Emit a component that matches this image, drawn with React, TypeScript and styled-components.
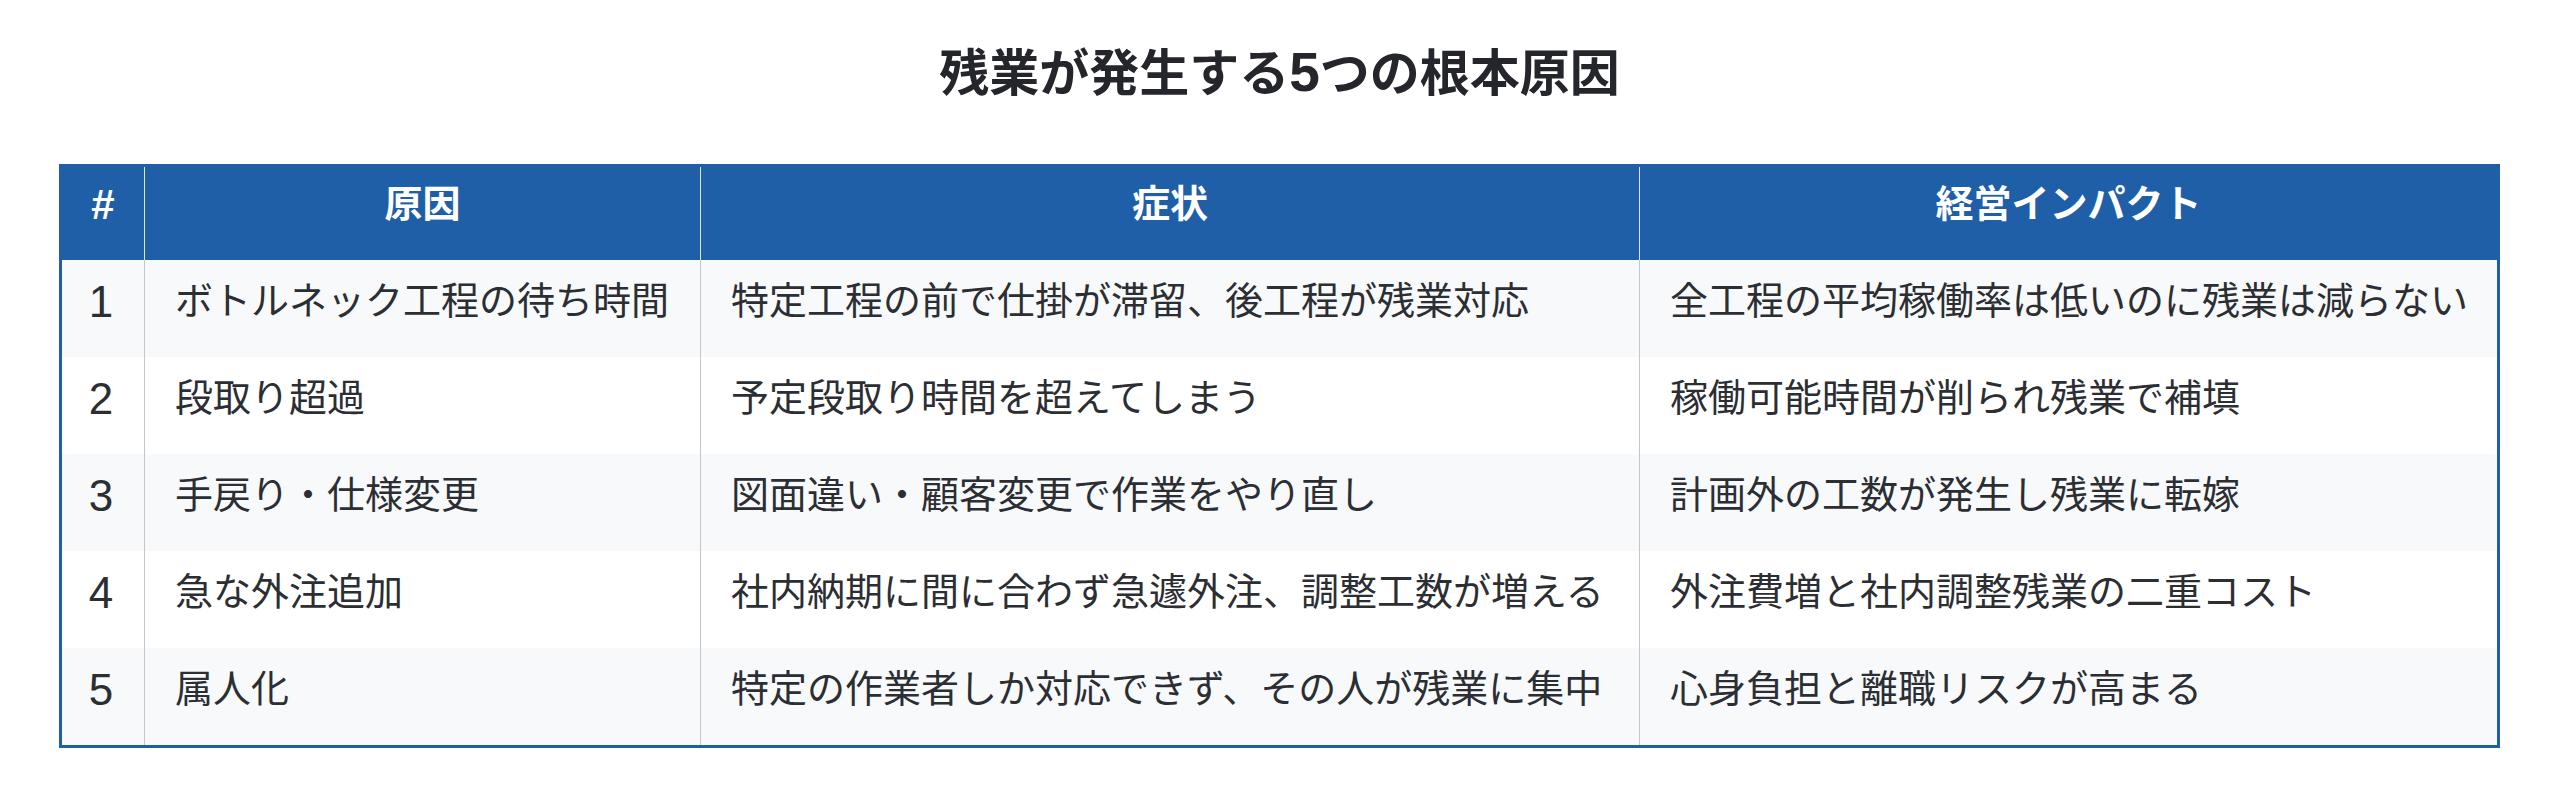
import React from "react";
import styled, { createGlobalStyle } from "styled-components";

const GlobalStyle = createGlobalStyle`
  html, body {
    margin: 0;
    padding: 0;
    background: #ffffff;
  }
  body {
    font-family: "Liberation Sans", "Noto Sans CJK JP", sans-serif;
    color: #2b2e33;
  }
`;

const Page = styled.div`
  padding: 42px 60px 40px 59px;
  display: flex;
  flex-direction: column;
  align-items: flex-start;
`;

const Title = styled.h2`
  align-self: stretch;
  margin: 0 0 60px;
  font-size: 50px;
  line-height: 60px;
  font-weight: 700;
  text-align: center;
  color: #24262b;
  font-family: "Liberation Sans", "Noto Sans CJK JP", sans-serif;
`;

const TitleDigit = styled.span`
  font-size: 55px;
  line-height: 60px;
`;

const Table = styled.table`
  width: 2441px;
  table-layout: fixed;
  border-collapse: separate;
  border-spacing: 0;
  border: 3px solid #1f5fa8;
  font-size: 38px;
  line-height: 57px;
`;

const HeadCell = styled.th<{ $w: number }>`
  box-sizing: border-box;
  width: ${(p) => p.$w}px;
  background: #1f5fa8;
  color: #ffffff;
  font-weight: 700;
  text-align: center;
  padding: 9px 20px 27px;
  white-space: nowrap;
  border-left: 1px solid rgba(255, 255, 255, 0.85);
  &:first-child {
    border-left: none;
    font-size: 42px;
  }
`;

const Row = styled.tr<{ $striped: boolean }>`
  background: ${(p) => (p.$striped ? "#f8f9fb" : "#ffffff")};
`;

const Cell = styled.td`
  box-sizing: border-box;
  padding: 13px 30px 27px;
  text-align: left;
  white-space: nowrap;
  color: #2b2e33;
  border-left: 1px solid #c4c6ca;
`;

const NumCell = styled(Cell)`
  border-left: none;
  padding-left: 0;
  padding-right: 4px;
  text-align: center;
  font-size: 44px;
`;

const columns = [
  { label: "#", w: 82 },
  { label: "原因", w: 556 },
  { label: "症状", w: 939 },
  { label: "経営インパクト", w: 858 },
];

const rows = [
  [
    "ボトルネック工程の待ち時間",
    "特定工程の前で仕掛が滞留、後工程が残業対応",
    "全工程の平均稼働率は低いのに残業は減らない",
  ],
  ["段取り超過", "予定段取り時間を超えてしまう", "稼働可能時間が削られ残業で補填"],
  ["手戻り・仕様変更", "図面違い・顧客変更で作業をやり直し", "計画外の工数が発生し残業に転嫁"],
  [
    "急な外注追加",
    "社内納期に間に合わず急遽外注、調整工数が増える",
    "外注費増と社内調整残業の二重コスト",
  ],
  ["属人化", "特定の作業者しか対応できず、その人が残業に集中", "心身負担と離職リスクが高まる"],
];

export default function App() {
  return (
    <>
      <GlobalStyle />
      <Page>
        <Title>
          残業が発生する<TitleDigit>5</TitleDigit>つの根本原因
        </Title>
        <Table>
          <thead>
            <tr>
              {columns.map((c) => (
                <HeadCell key={c.label} $w={c.w}>
                  {c.label}
                </HeadCell>
              ))}
            </tr>
          </thead>
          <tbody>
            {rows.map((r, i) => (
              <Row key={i} $striped={i % 2 === 0}>
                <NumCell>{i + 1}</NumCell>
                {r.map((t, j) => (
                  <Cell key={j}>{t}</Cell>
                ))}
              </Row>
            ))}
          </tbody>
        </Table>
      </Page>
    </>
  );
}
